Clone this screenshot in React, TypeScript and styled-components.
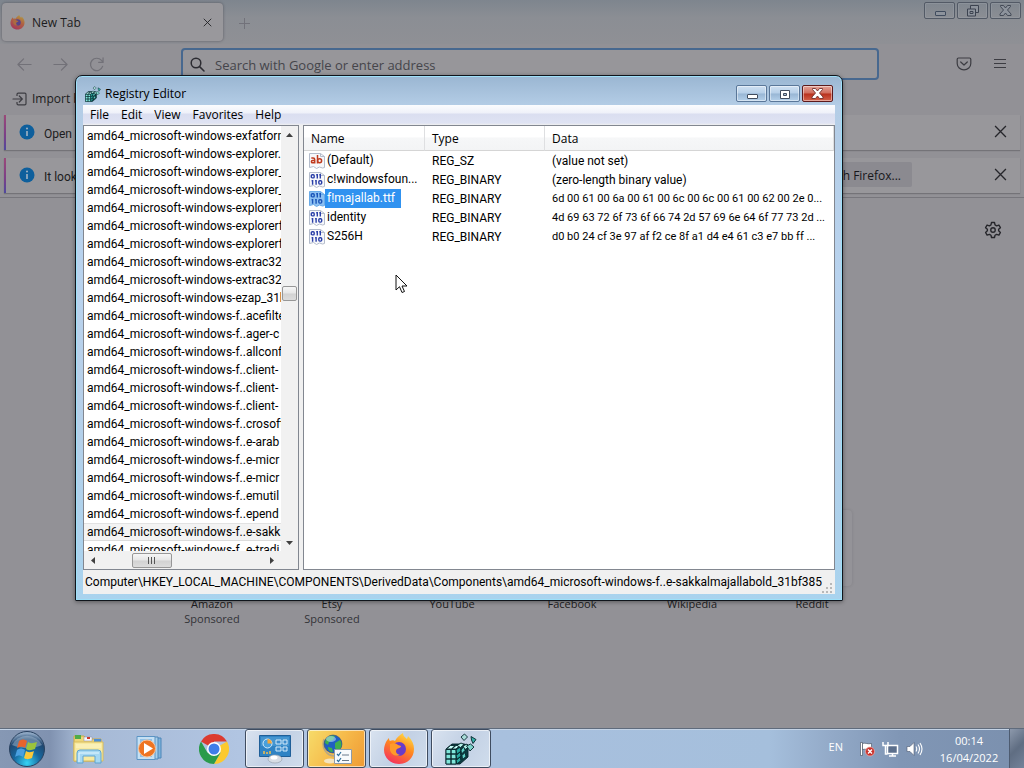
import React from "react";
import styled, { createGlobalStyle } from "styled-components";

const GlobalStyle = createGlobalStyle`
  *, *::before, *::after { box-sizing: border-box; }
  html, body { margin: 0; padding: 0; }
  body, button, input, table {
    font-family: "Open Sans", "Noto Sans", sans-serif;
    font-size: 12px;
    line-height: 16px;
    color: #000;
  }
  button { border: 0; padding: 0; background: none; }
  a { color: inherit; text-decoration: none; }
  svg { display: block; flex: none; }
`;

const compact = `font-family: Roboto, "Open Sans", sans-serif;`;

const Desktop = styled.div`
  position: relative;
  display: flex;
  flex-direction: column;
  min-height: 100vh;
  overflow: hidden;
  background: #949398;
`;

/* ---------- dimmed browser ---------- */

const Browser = styled.main`
  flex: 1;
  display: flex;
  flex-direction: column;
  color: #1c1c20;
  background: #929196;
`;

const TabStrip = styled.div`
  display: flex;
  align-items: flex-start;
  height: 44px;
  padding: 2px 3px 0 2px;
  background: linear-gradient(#7e858e, #8b8e94 40%, #8f9095);
`;

const Tab = styled.div`
  display: flex;
  align-items: center;
  gap: 7px;
  width: 221px;
  height: 38px;
  margin-top: 1px;
  padding: 1px 8px 0;
  border-radius: 4px;
  background: #99989c;
  box-shadow: 0 0 2px 1px rgba(60, 60, 70, 0.3);
`;

const TabTitle = styled.span`
  flex: 1;
`;

const GhostButton = styled.button<{ $w: number; $h: number }>`
  display: flex;
  align-items: center;
  justify-content: center;
  flex: none;
  width: ${(p) => p.$w}px;
  height: ${(p) => p.$h}px;
`;

const Captions = styled.div`
  display: flex;
  gap: 2px;
  margin-left: auto;
`;

const CaptionButton = styled.button<{ $kind: "dim" | "normal" | "close" }>`
  display: flex;
  align-items: center;
  justify-content: center;
  width: 31px;
  height: 17px;
  border-radius: 2px;
  border: 1px solid
    ${(p) => (p.$kind === "dim" ? "#535a66" : p.$kind === "close" ? "#5c1a1c" : "#5a7799")};
  background: ${(p) =>
    p.$kind === "dim"
      ? "transparent"
      : p.$kind === "close"
      ? "linear-gradient(#e3a398, #d06c5c 48%, #b8301c 52%, #d4614a)"
      : "linear-gradient(#cfe0f2, #b6cfe8 48%, #98b6d4 52%, #b4d0ea)"};
  box-shadow: inset 0 0 0 1px
    ${(p) => (p.$kind === "dim" ? "rgba(160,165,175,0.35)" : "rgba(255,255,255,0.45)")};
`;

const NavBar = styled.div`
  display: flex;
  align-items: center;
  height: 40px;
  padding: 0 6px;
`;

const AddressBox = styled.label`
  display: flex;
  align-items: center;
  gap: 10px;
  flex: 1;
  height: 32px;
  margin: 0 67px;
  padding: 0 7px;
  border: 2px solid #47688f;
  border-radius: 4px;
  background: #97969a;
`;

const AddressInput = styled.input`
  flex: 1;
  min-width: 0;
  border: 0;
  outline: 0;
  padding: 2px 0 0;
  background: none;
  font-size: 13px;
  line-height: 20px;
  &::placeholder { color: #45454b; opacity: 1; }
`;

const BookmarkBar = styled.div`
  display: flex;
  align-items: center;
  gap: 4px;
  height: 29px;
  padding: 0 12px;
`;

const Notices = styled.div`
  ${compact}
  display: flex;
  flex-direction: column;
  gap: 8px;
  padding: 2px 4px 4px;
  border-bottom: 1px solid #77767c;
`;

const Notice = styled.div`
  display: flex;
  align-items: center;
  height: 35px;
  padding: 0 2px 2px 13px;
  gap: 9px;
  border-left: 2px solid;
  border-image: linear-gradient(#9c4a78, #7a3f88 60%, #4c4aa0) 1;
  background: #98979b;
  box-shadow: 0 1px 1px rgba(60, 60, 66, 0.35);
`;

const NoticeText = styled.span`
  flex: 1;
  padding-top: 4px;
`;

const NoticeAction = styled.button`
  height: 25px;
  padding: 2px 11px 0;
  margin-right: 61px;
  font-family: "Open Sans", sans-serif;
  background: #8b8a90;
  color: #17171b;
  border-radius: 2px;
`;

const NewTabPage = styled.div`
  flex: 1;
  display: flex;
  flex-direction: column;
  justify-content: space-between;
  padding: 14px 13px 102px;
`;

const SettingsRow = styled.div`
  display: flex;
  justify-content: flex-end;
`;

const Shortcuts = styled.nav`
  display: flex;
  justify-content: center;
`;

const Shortcut = styled.a`
  display: flex;
  flex-direction: column;
  align-items: center;
  width: 120px;
  font-size: 11px;
  line-height: 15px;
`;

const Tile = styled.span`
  width: 80px;
  height: 76px;
  margin-bottom: 10px;
  border-radius: 4px;
  background: #949398;
  box-shadow: 0 0 3px rgba(70, 70, 76, 0.2);
`;

const Sponsor = styled.span`
  color: #333338;
`;

/* ---------- registry editor window ---------- */

const Win = styled.section`
  position: absolute;
  top: 75px;
  left: 75px;
  right: 181px;
  bottom: 167px;
  display: flex;
  flex-direction: column;
  padding: 0 7px 6px;
  border: 1px solid #10151c;
  border-radius: 7px 7px 1px 1px;
  background: linear-gradient(#9ab6d2, #b4cde6 30px, #b9d3ee 200px, #b7cfe8 60%, #a9d3ee);
  box-shadow: inset 0 0 0 1px #9fe0f8, 0 1px 4px rgba(0, 0, 0, 0.4);
`;

const TitleBar = styled.header`
  display: flex;
  align-items: center;
  gap: 4px;
  height: 29px;
  padding: 6px 2px 0;
`;

const Title = styled.h1`
  flex: 1;
  margin: 0;
  font-size: 12px;
  line-height: 16px;
  font-weight: 400;
`;

const MenuBar = styled.nav`
  display: flex;
  height: 20px;
  padding: 0 1px;
  background: linear-gradient(#fbfcfe, #eff1f9 40%, #dadef0 45%, #dfe3f3 90%, #f0f0f0);
`;

const MenuItem = styled.button`
  padding: 0 6px;
  line-height: 20px;
`;

const Panes = styled.div`
  flex: 1;
  min-height: 0;
  display: flex;
  gap: 4px;
  background: #f0f0f0;
`;

const Pane = styled.div<{ $w?: number }>`
  display: flex;
  flex-direction: column;
  min-width: 0;
  flex: ${(p) => (p.$w ? `0 0 ${p.$w}px` : "1")};
  border: 1px solid #828790;
  background: #fff;
  overflow: hidden;
`;

const TreeArea = styled.div`
  flex: 1;
  min-height: 0;
  display: flex;
`;

const Tree = styled.ul`
  ${compact}
  flex: 1;
  min-width: 0;
  margin: 0;
  padding: 1px 0 0;
  list-style: none;
  overflow: hidden;
`;

const TreeItem = styled.li<{ $on: boolean }>`
  height: 18px;
  padding-left: 3px;
  line-height: 18px;
  white-space: nowrap;
  overflow: hidden;
  background: ${(p) => (p.$on ? "#f3f3f3" : "transparent")};
  box-shadow: ${(p) => (p.$on ? "inset 0 1px #e2e2e2, inset 0 -1px #dcdcdc" : "none")};
`;

const Scroll = styled.div<{ $dir: "row" | "column" }>`
  display: flex;
  flex: none;
  flex-direction: ${(p) => p.$dir};
  align-items: center;
  ${(p) => (p.$dir === "row" ? "height: 18px; padding-right: 18px;" : "width: 17px;")}
  background: #f1f1f1;
`;

const Track = styled.span<{ $grow: number }>`
  flex: ${(p) => p.$grow};
`;

const Thumb = styled.span<{ $w: number }>`
  display: flex;
  align-items: center;
  justify-content: center;
  gap: 2px;
  width: ${(p) => p.$w}px;
  height: 15px;
  border: 1px solid #979797;
  border-radius: 2px;
  background: linear-gradient(#f6f6f6, #e6e6e6 48%, #d2d2d2 52%, #dcdcdc);
`;

const Grip = styled.i`
  width: 1px;
  height: 7px;
  background: #555;
`;

const Values = styled.table`
  width: 100%;
  table-layout: fixed;
  border-collapse: separate;
  border-spacing: 0;
  text-align: left;
`;

const Head = styled.th<{ $w?: number }>`
  width: ${(p) => (p.$w ? `${p.$w}px` : "auto")};
  height: 25px;
  padding: 1px 6px 0 7px;
  font-weight: 400;
  border-right: 1px solid #dedfe1;
  border-bottom: 1px solid #d5d5d5;
  background: linear-gradient(#fff 45%, #f6f7f8 50%, #f3f4f5);
`;

const Cell = styled.td<{ $hex?: boolean }>`
  ${compact}
  height: 19px;
  padding: 0 0 0 7px;
  font-size: ${(p) => (p.$hex ? 11 : 12)}px;
  white-space: nowrap;
  overflow: hidden;
`;

const NameCell = styled(Cell)`
  padding-left: 5px;
`;

const NameFlex = styled.div`
  display: flex;
  align-items: center;
`;

const NameText = styled.span<{ $on: boolean }>`
  padding: 1px 6px 2px 2px;
  color: ${(p) => (p.$on ? "#fff" : "#000")};
  background: ${(p) => (p.$on ? "#3092f0" : "transparent")};
`;

const StatusBar = styled.footer`
  display: flex;
  align-items: flex-end;
  height: 24px;
  padding: 0 2px;
  background: #f0f0f0;
`;

const Path = styled.span`
  ${compact}
  flex: 1;
  min-width: 0;
  line-height: 24px;
  white-space: nowrap;
`;

const Pointer = styled.div`
  position: absolute;
  left: 395px;
  top: 274px;
`;

/* ---------- taskbar ---------- */

const Taskbar = styled.footer`
  display: flex;
  align-items: stretch;
  height: 40px;
  border-top: 1px solid #5f6b7c;
  box-shadow: inset 0 1px #c3d3e6;
  background: linear-gradient(
    90deg,
    #8698b4 0,
    #8092b0 50px,
    #a6b9d5 80px,
    #b1c5e2 240px,
    #a8c0de 500px,
    #a5bfdc 770px,
    #93aac8 830px,
    #8096b5 900px,
    #7b90ae 100%
  );
`;

const TaskButton = styled.button<{ $w: number; $tone?: "open" | "alert" }>`
  display: flex;
  align-items: center;
  justify-content: center;
  width: ${(p) => p.$w}px;
  margin-right: ${(p) => (p.$tone ? 3 : 0)}px;
  border: 1px solid ${(p) => (p.$tone ? "#3f4c60" : "transparent")};
  border-radius: 3px;
  box-shadow: ${(p) => (p.$tone ? "inset 0 0 0 1px rgba(255,255,255,0.6)" : "none")};
  background: ${(p) =>
    p.$tone === "alert"
      ? "linear-gradient(120deg, #f6dc6a, #f6bb4b 50%, #ef9a34)"
      : p.$tone === "open"
      ? "linear-gradient(120deg, #d9e3f0, #c2d0e4 50%, #d0ddec)"
      : "none"};
`;

const StartButton = styled(TaskButton)`
  margin-right: 4px;
`;

const Tray = styled.div`
  display: flex;
  align-items: center;
  margin-left: auto;
  color: #fff;
`;

const Lang = styled.span`
  margin-right: 16px;
  padding-bottom: 4px;
  font-size: 11px;
`;

const TrayIcons = styled.div`
  display: flex;
  align-items: center;
  gap: 7px;
`;

const Clock = styled.time`
  width: 80px;
  margin-left: 6px;
  padding-top: 1px;
  text-align: center;
  font-size: 11px;
  line-height: 17px;
`;

const ShowDesktop = styled.button`
  width: 15px;
  align-self: stretch;
  border-left: 1px solid #4d5b70;
  background: linear-gradient(135deg, #8d99ac, #5f6d82 50%, #74839a);
`;

/* ---------- drawings ---------- */

const Firefox = ({ size, dim }: { size: number; dim?: boolean }) => (
  <svg width={size} height={size} viewBox="0 0 32 32" opacity={dim ? 0.8 : 1}>
    <defs>
      <linearGradient id={dim ? "fxd" : "fx"} x1="0.8" y1="0" x2="0.3" y2="1">
        <stop offset="0" stopColor={dim ? "#b8a02c" : "#ffe14a"} />
        <stop offset="0.45" stopColor={dim ? "#b5562c" : "#ff8a1e"} />
        <stop offset="1" stopColor={dim ? "#a8204c" : "#f5315e"} />
      </linearGradient>
    </defs>
    <path
      d="M3 9c1-2 2-3 3-4 0 1 0 2 1 3 2-1 4-1 5 0 2-4 5-6 8-8 0 3 2 4 4 6l1-3c4 4 6 8 6 13 0 9-7 15-15 15S1 25 1 17c0-3 1-6 2-8z"
      fill={`url(#${dim ? "fxd" : "fx"})`}
    />
    <circle cx="16" cy="16" r="7" fill={dim ? "#4a2f84" : "#6a3cc8"} />
    <path d="M7 11c3-1 6-1 8 1l3 1c0 2-3 2-4 3-2 2-1 5 3 6-5 2-9-1-10-5z" fill={dim ? "#b0602c" : "#ff9a2a"} />
  </svg>
);

const Minimize = ({ dim }: { dim?: boolean }) => (
  <svg width="12" height="12" viewBox="0 0 12 12">
    <rect x="1.5" y="6.5" width="10" height="4" rx="0.5" fill={dim ? "#8d939c" : "#fff"} stroke="#404c5e" />
  </svg>
);

const Maximize = () => (
  <svg width="12" height="12" viewBox="0 0 12 12">
    <path d="M1.500 2.500h9v8h-9z" fill="#fff" stroke="#404c5e" />
    <path d="M4.500 5.500h3v2h-3z" fill="#a8bfd8" stroke="#404c5e" />
  </svg>
);

const Restore = () => (
  <svg width="13" height="12" viewBox="0 0 13 12">
    <path d="M4.500.5h8v7h-3v3.500h-8v-7h3z" fill="#8d939c" stroke="#3c4350" />
    <path d="M4.500 4h5v4M4 6.500h3v2H4z" fill="none" stroke="#3c4350" />
  </svg>
);

const CloseMark = ({ dim }: { dim?: boolean }) => (
  <svg width="13" height="11" viewBox="0 0 13 11">
    <path
      d="M1.500.5h3l2 2.500 2-2.500h3v1L8.500 5l3.500 4v1.500H8.500l-2-2.500-2 2.500H1V9l3.500-4L1.500 1.500z"
      fill={dim ? "#8d939c" : "#fff"}
      stroke={dim ? "#3c4350" : "#70302c"}
      strokeWidth="0.9"
    />
  </svg>
);

const Cross = ({ s, c }: { s: number; c: string }) => (
  <svg width={s} height={s} viewBox="0 0 12 12" fill="none" stroke={c} strokeWidth="1.200">
    <path d="M1 1l10 10M11 1L1 11" />
  </svg>
);

const Arrow = ({ flip }: { flip?: boolean }) => (
  <svg width="15" height="15" viewBox="0 0 16 16" fill="none" stroke="#727178" strokeWidth="1.300">
    <path d={flip ? "M1 8h14M9 2l6 6-6 6" : "M15 8H1M7 2L1 8l6 6"} strokeLinecap="round" strokeLinejoin="round" />
  </svg>
);

const Reload = () => (
  <svg width="15" height="15" viewBox="0 0 16 16" fill="none" stroke="#727178" strokeWidth="1.300">
    <path d="M14.500 10a6.600 6.600 0 1 1-1.200-6.300L15 5.500M15 1v4.700h-4.700" strokeLinecap="round" />
  </svg>
);

const Magnifier = () => (
  <svg width="15" height="15" viewBox="0 0 15 15" fill="none" stroke="#2c2c32" strokeWidth="1.500">
    <circle cx="6" cy="6" r="4.800" />
    <path d="M9.600 9.600l4.400 4.400" strokeLinecap="round" />
  </svg>
);

const Pocket = () => (
  <svg width="16" height="16" viewBox="0 0 16 16" fill="none" stroke="#3c3c42" strokeWidth="1.200">
    <path d="M2.500 2h11c.8 0 1.300.5 1.300 1.300V7.500a6.800 6.300 0 0 1-13.600 0V3.300C1.200 2.500 1.700 2 2.500 2z" />
    <path d="M4.700 6L8 9l3.300-3" strokeLinecap="round" strokeLinejoin="round" />
  </svg>
);

const Burger = () => (
  <svg width="14" height="12" viewBox="0 0 14 12" stroke="#3c3c42" strokeWidth="1">
    <path d="M1 1.500h12M1 5.500h12M1 9.500h12" />
  </svg>
);

const ImportIcon = () => (
  <svg width="16" height="14" viewBox="0 0 16 14" fill="none" stroke="#3c3c42" strokeWidth="1.200">
    <path d="M5 4V2.500c0-.8.4-1.300 1.200-1.300h6.600c.8 0 1.200.5 1.200 1.300v9c0 .8-.4 1.300-1.200 1.300H6.200C5.400 12.800 5 12.300 5 11.500V10" />
    <path d="M1 7h9M7.300 4l3 3-3 3" strokeLinecap="round" />
  </svg>
);

const Info = () => (
  <svg width="16" height="16" viewBox="0 0 16 16">
    <circle cx="8" cy="8" r="7.500" fill="#0e5f9c" />
    <path d="M8 7v5" stroke="#a3b3c4" strokeWidth="1.600" />
    <circle cx="8" cy="4.500" r="1" fill="#a3b3c4" />
  </svg>
);

const Gear = () => (
  <svg width="18" height="18" viewBox="0 0 24 24" fill="none" stroke="#26262b" strokeWidth="1.800" strokeLinejoin="round">
    <path d="M10 2h4l.7 3.200 2 1.200 3.200-1 2 3.500-2.400 2.200v2l2.400 2.200-2 3.500-3.200-1-2 1.200L14 22h-4l-.7-3-2-1.200-3.200 1-2-3.500 2.400-2.200v-2L2.100 8.900l2-3.500 3.200 1 2-1.200z" />
    <circle cx="12" cy="12" r="3" />
  </svg>
);

const RegIcon = ({ size }: { size: number }) => (
  <svg width={size} height={size} viewBox="0 0 32 32" stroke="#05252a" strokeWidth="0.900" strokeLinejoin="round">
    <path d="M1 16l6-5h12l4 1v12l-8 7H1z" fill="#0c3c42" />
    <path d="M1 16.500h5v4.500H1zM6 16.500h5v4.500H6zM1 21h5v5H1zM6 21h5v5H6zM1 26h5v5H1zM6 26h5v5H6z" fill="#7fe6da" />
    <path d="M1.500 16l4-3.500h4.500l-3.500 3.500zM7 16l4-3.500h4l-4 3.500z" fill="#c8fff8" />
    <path d="M11 17l4-3 1 4-4 3.500zM11 22l4-3 1 4-4 3.500zM11 27l4-3 1 3.500-4 3.500z" fill="#28a8a0" />
    <path d="M16 17l3-3.500 1 4-3.500 3.500zM17 22.500l3-3 1 4-3.500 3z" fill="#5fd0c6" />
    <path d="M12 12.500l4-2.500 3 1.500-3.500 3zM18 13l4-2 2 3-4 2.500z" fill="#b4f2ea" />
    <path d="M16 4l3.500-3 3 3-3.500 3.500z" fill="#a9dcd8" />
    <path d="M26 3.500l5 3-3 4-1.500-3.500z" fill="#36b0a8" />
    <path d="M21.500 13l4-2 3.500 3-4 4z" fill="#7fd4cc" />
  </svg>
);

const ValueIcon = ({ kind, on }: { kind: "ab" | "bin"; on?: boolean }) => (
  <svg width="16" height="16" viewBox="0 0 16 16">
    <path d="M.5.500h11l4 3v11l-2 .5-3-1-3 1.500-3-2-4 1z" fill={on ? "#8cc0f2" : "#f7f8fb"} stroke={on ? "#6aabe8" : "#b4bccb"} />
    <path d="M11.500.5v3h4" fill="none" stroke={on ? "#6aabe8" : "#b4bccb"} />
    {kind === "ab" ? (
      <g fill="none" stroke="#c03a1e" strokeWidth="1.500">
        <path d="M2.300 5h1.800c1 0 1.600.5 1.600 1.500v4M5.700 7.500H3.500c-1.500 0-1.500 2.300 0 2.300h2.200M8.500 2v8.500" />
        <circle cx="10.600" cy="7.800" r="2" />
      </g>
    ) : (
      <g fill="none" stroke={on ? "#1b55b8" : "#2a3fa8"} strokeWidth="1.400">
        <rect x="2.300" y="2.700" width="2.900" height="3.200" rx="1" />
        <path d="M8.300 2v4.600M11.300 2v4.600M7.200 2.700h1M10.300 2.700h1M3.600 8v4.800M7.100 8v4.800M2.600 8.700h1M6.100 8.700h1" />
        <rect x="9.800" y="8.700" width="2.900" height="3.400" rx="1" />
      </g>
    )}
  </svg>
);

const Tri = ({ d }: { d: string }) => (
  <svg width="17" height="17" viewBox="0 0 17 17">
    <path d={d} fill="#404040" />
  </svg>
);

const SizeGrip = () => (
  <svg width="12" height="12" viewBox="0 0 12 12" fill="#b8b8b8">
    <path d="M9 1h2v2H9zM9 5h2v2H9zM5 5h2v2H5zM9 9h2v2H9zM5 9h2v2H5zM1 9h2v2H1z" />
  </svg>
);

const Orb = () => (
  <svg width="38" height="38" viewBox="0 0 38 38">
    <defs>
      <radialGradient id="orb" cx="0.5" cy="0.9" r="0.85">
        <stop offset="0" stopColor="#35d3f4" />
        <stop offset="0.45" stopColor="#17689f" />
        <stop offset="0.8" stopColor="#20476f" />
        <stop offset="1" stopColor="#8fa8c4" />
      </radialGradient>
    </defs>
    <circle cx="19" cy="19" r="17.500" fill="url(#orb)" stroke="#29415f" />
    <path d="M4 15a16 14 0 0 1 30 0c-8 4-22 4-30 0z" fill="#c5d6e8" opacity="0.4" />
    <path d="M11 11c3-2 5-2 8 0l-2 7c-3-2-5-1-8 0z" fill="#e8642c" />
    <path d="M20 12c3 2 6 1 9 0l-2 7c-3 1-6 2-9 0z" fill="#9bc43c" />
    <path d="M9 20c3-2 5-2 8 0l-2 7c-3-2-5-2-8 0z" fill="#4aa0e0" />
    <path d="M18 21c3 2 6 1 8 0l-2 7c-3 1-5 2-8 0z" fill="#fbc93a" />
  </svg>
);

const Explorer = () => (
  <svg width="34" height="32" viewBox="0 0 34 32">
    <path d="M2 3h10l2 3h15v22H2z" fill="#eed67a" stroke="#c8a848" />
    <path d="M3 2h6v4H3z" fill="#4eac4a" />
    <path d="M12 4h8v4h-8z" fill="#f6f8fb" stroke="#88a" strokeWidth="0.500" />
    <path d="M15 4h3v2h-3z" fill="#cc3b2c" />
    <path d="M22 6h7v4h-7z" fill="#4d8fd6" />
    <path d="M2 9h29v19H2z" fill="#f8eaa0" stroke="#d8bc5c" />
    <path d="M4 14h25M4 12h25" stroke="#fdf6cc" />
    <path d="M5 30V20q0-3 3-3h18q3 0 3 3v10h-6v-7H11v7z" fill="#a6d8f2" stroke="#5fa4d0" />
    <path d="M7 29v-9h20" fill="none" stroke="#e4f6ff" />
  </svg>
);

const MediaPlayer = () => (
  <svg width="32" height="28" viewBox="0 0 32 28">
    <path d="M9 3h17v20H9z" fill="#7fb3dc" stroke="#4d86b8" />
    <path d="M6 2h17v22H6z" fill="#a8cfea" stroke="#4d86b8" />
    <path d="M2 1.500h18v23H2z" fill="#c5e0f4" stroke="#5b94c4" />
    <path d="M5 4h12v18H5z" fill="#8fc0e6" />
    <circle cx="12" cy="13.500" r="8.500" fill="#ee7422" stroke="#f8c49c" />
    <path d="M9 8l9 5.500L9 19z" fill="#fff" />
  </svg>
);

const Chrome = () => (
  <svg width="30" height="30" viewBox="0 0 30 30">
    <path d="M15 15L2 7.500A15 15 0 0 1 28 7.500H15z" fill="#dc3b30" />
    <path d="M15 15L28 7.500A15 15 0 0 1 15 30l6.500-11.200z" fill="#fbc92f" />
    <path d="M15 15l6.500 3.700L15 30A15 15 0 0 1 2 7.500l6.500 11.300z" fill="#2b9b4b" />
    <circle cx="15" cy="15" r="7" fill="#fff" />
    <circle cx="15" cy="15" r="5.500" fill="#3f7de8" />
  </svg>
);

const ControlPanel = () => (
  <svg width="34" height="30" viewBox="0 0 34 30">
    <path d="M1.500 1.500h31v21h-31z" fill="#2f83c4" stroke="#1f5f98" />
    <path d="M3 3h28v9H3z" fill="#5aa8dc" opacity="0.500" />
    <circle cx="9.500" cy="9.500" r="4.500" fill="#48a0dc" stroke="#d4ebfa" />
    <path d="M9.500 9.500V5a4.500 4.500 0 0 1 4.500 4.500z" fill="#f2a63c" />
    <path d="M18 6h5v4h-5zM25 6h4v4h-4zM18 13h5v4h-5zM25 13h4v4h-4z" fill="#3c8ccc" stroke="#d4ebfa" />
    <path d="M6 17v3M9 18v2M12 17v3" stroke="#f2c04c" strokeWidth="1.500" />
    <ellipse cx="17" cy="25" rx="7" ry="4" fill="#d7dde4" stroke="#98a2ae" strokeWidth="0.700" />
    <ellipse cx="16" cy="23.500" rx="3.500" ry="2" fill="#fff" />
  </svg>
);

const GlobeList = () => (
  <svg width="32" height="32" viewBox="0 0 32 32">
    <ellipse cx="9" cy="28" rx="6" ry="2.500" fill="#f4e4c0" />
    <path d="M3 6c-3 8 2 17 11 17" fill="none" stroke="#b9a880" strokeWidth="1.500" />
    <circle cx="12" cy="11" r="9" fill="#1f5fc0" stroke="#204070" strokeWidth="0.500" />
    <path d="M5 6c3-4 7-4 9-3l-2 4-4 2-1 3-3-2zM14 10l5-3c3 4 1 9-2 11l-3-3zM7 14l4 1 1 4c-3 0-5-2-5-5z" fill="#3fae4c" />
    <ellipse cx="10" cy="6" rx="5" ry="3" fill="#bfe4ff" opacity="0.550" />
    <path d="M13.500 16.500h17v14h-17z" fill="#f8fafc" stroke="#8e9aa8" />
    <path d="M16 21l1.500 1.500L20 19M16 27l1.500 1.500L20 25" fill="none" stroke="#2f6f9c" strokeWidth="1.200" />
    <path d="M21 22h7M21 27.500h7" stroke="#6a7a8c" />
  </svg>
);

const FlagIcon = () => (
  <svg width="16" height="16" viewBox="0 0 16 16">
    <path d="M1.500 1.500h2v13h-2z" fill="#fff" stroke="#3a4658" strokeWidth="0.600" />
    <path d="M3.500 2.500c3-1 5 1 9 0v6c-4 1-6-1-9 0z" fill="#fff" stroke="#3a4658" strokeWidth="0.600" />
    <circle cx="11" cy="10.500" r="4.500" fill="#c9302a" stroke="#f0b4b0" strokeWidth="0.700" />
    <path d="M9 8.500l4 4M13 8.500l-4 4" stroke="#fff" strokeWidth="1.400" />
  </svg>
);

const NetIcon = () => (
  <svg width="17" height="16" viewBox="0 0 17 16">
    <path d="M5.500 4.500h10v8h-10z" fill="#5c6f8c" stroke="#fff" strokeWidth="1.500" />
    <path d="M7 15h7M10.500 13v2" stroke="#fff" strokeWidth="1.500" />
    <path d="M1 1v3.500h5V1M3.500 4.500V13h2" fill="none" stroke="#fff" strokeWidth="1.500" />
  </svg>
);

const VolumeIcon = () => (
  <svg width="17" height="16" viewBox="0 0 17 16">
    <path d="M1 5.500h3L8 1.500v13l-4-4H1z" fill="#fff" stroke="#4a5870" strokeWidth="0.600" />
    <path d="M10 5.500q1.500 2.500 0 5M12 3.500q3 4.500 0 9M14 2q4 6 0 12" fill="none" stroke="#fff" strokeWidth="1.100" />
  </svg>
);

/* ---------- data ---------- */

const SELECTED_KEY = 22;
const KEYS = [
  "exfatform", "explorer.", "explorer_", "explorer_", "explorerfr", "explorerfr", "explorerfr",
  "extrac32", "extrac32_", "ezap_31b", "f..acefilte", "f..ager-c", "f..allconf", "f..client-",
  "f..client-", "f..client-", "f..crosoft", "f..e-arab", "f..e-micr", "f..e-micr", "f..emutil",
  "f..epend", "f..e-sakk", "f..e-tradi",
];

const VALUES = [
  { name: "(Default)", type: "REG_SZ", data: "(value not set)" },
  { name: "c!windowsfoun...", type: "REG_BINARY", data: "(zero-length binary value)" },
  { name: "f!majallab.ttf", type: "REG_BINARY", data: "6d 00 61 00 6a 00 61 00 6c 00 6c 00 61 00 62 00 2e 0..." },
  { name: "identity", type: "REG_BINARY", data: "4d 69 63 72 6f 73 6f 66 74 2d 57 69 6e 64 6f 77 73 2d ..." },
  { name: "S256H", type: "REG_BINARY", data: "d0 b0 24 cf 3e 97 af f2 ce 8f a1 d4 e4 61 c3 e7 bb ff ..." },
];

const SITES = [
  { name: "Amazon", ad: true },
  { name: "Etsy", ad: true },
  { name: "YouTube", ad: false },
  { name: "Facebook", ad: false },
  { name: "Wikipedia", ad: false },
  { name: "Reddit", ad: false },
];

const BrowserWindow = () => (
  <Browser>
    <TabStrip>
      <Tab>
        <Firefox size={15} dim />
        <TabTitle>New Tab</TabTitle>
        <GhostButton $w={16} $h={16} aria-label="Close tab"><Cross s={9} c="#222226" /></GhostButton>
      </Tab>
      <GhostButton $w={42} $h={42} aria-label="Open a new tab">
        <svg width="11" height="11" viewBox="0 0 11 11" stroke="#72727a"><path d="M5.500 0v11M0 5.500h11" /></svg>
      </GhostButton>
      <Captions>
        <CaptionButton $kind="dim" aria-label="Minimize browser"><Minimize dim /></CaptionButton>
        <CaptionButton $kind="dim" aria-label="Restore browser"><Restore /></CaptionButton>
        <CaptionButton $kind="dim" aria-label="Close browser"><CloseMark dim /></CaptionButton>
      </Captions>
    </TabStrip>
    <NavBar>
      <GhostButton $w={36} $h={36} aria-label="Back"><Arrow /></GhostButton>
      <GhostButton $w={36} $h={36} aria-label="Forward"><Arrow flip /></GhostButton>
      <GhostButton $w={36} $h={36} aria-label="Reload"><Reload /></GhostButton>
      <AddressBox>
        <Magnifier />
        <AddressInput aria-label="Address" placeholder="Search with Google or enter address" />
      </AddressBox>
      <GhostButton $w={36} $h={36} aria-label="Save to Pocket"><Pocket /></GhostButton>
      <GhostButton $w={36} $h={36} aria-label="Open menu"><Burger /></GhostButton>
    </NavBar>
    <BookmarkBar>
      <ImportIcon />
      <a href="#import">Import bookmarks...</a>
    </BookmarkBar>
    <Notices>
      <Notice>
        <Info />
        <NoticeText>Open previous tabs?</NoticeText>
        <GhostButton $w={36} $h={32} aria-label="Dismiss restore notice"><Cross s={13} c="#26262b" /></GhostButton>
      </Notice>
      <Notice>
        <Info />
        <NoticeText>It looks like you haven't started Firefox in a while.</NoticeText>
        <NoticeAction>Refresh Firefox...</NoticeAction>
        <GhostButton $w={36} $h={32} aria-label="Dismiss refresh notice"><Cross s={13} c="#26262b" /></GhostButton>
      </Notice>
    </Notices>
    <NewTabPage>
      <SettingsRow>
        <GhostButton $w={36} $h={36} aria-label="Customize new tab"><Gear /></GhostButton>
      </SettingsRow>
      <Shortcuts>
        {SITES.map((s) => (
          <Shortcut key={s.name} href={`#${s.name}`}>
            <Tile />
            <span>{s.name}</span>
            {s.ad && <Sponsor>Sponsored</Sponsor>}
          </Shortcut>
        ))}
      </Shortcuts>
    </NewTabPage>
  </Browser>
);

const RegistryWindow = () => (
  <Win>
    <TitleBar>
      <RegIcon size={16} />
      <Title>Registry Editor</Title>
      <Captions>
        <CaptionButton $kind="normal" aria-label="Minimize"><Minimize /></CaptionButton>
        <CaptionButton $kind="normal" aria-label="Maximize"><Maximize /></CaptionButton>
        <CaptionButton $kind="close" aria-label="Close"><CloseMark /></CaptionButton>
      </Captions>
    </TitleBar>
    <MenuBar>
      {["File", "Edit", "View", "Favorites", "Help"].map((m) => (
        <MenuItem key={m}>{m}</MenuItem>
      ))}
    </MenuBar>
    <Panes>
      <Pane $w={216}>
        <TreeArea>
          <Tree>
            {KEYS.map((k, i) => (
              <TreeItem key={i} $on={i === SELECTED_KEY}>{`amd64_microsoft-windows-${k}`}</TreeItem>
            ))}
          </Tree>
          <Scroll $dir="column">
            <Tri d="M5 11l3.500-4 3.500 4z" />
            <Track $grow={38} />
            <Thumb $w={15} />
            <Track $grow={62} />
            <Tri d="M5 7l3.500 4L12 7z" />
          </Scroll>
        </TreeArea>
        <Scroll $dir="row">
          <Tri d="M11 5L7 8.500l4 3.500z" />
          <Track $grow={25} />
          <Thumb $w={40}><Grip /><Grip /><Grip /></Thumb>
          <Track $grow={75} />
          <Tri d="M7 5l4 3.500L7 12z" />
        </Scroll>
      </Pane>
      <Pane>
        <Values>
          <thead>
            <tr>
              <Head $w={121}>Name</Head>
              <Head $w={120}>Type</Head>
              <Head>Data</Head>
            </tr>
          </thead>
          <tbody>
            {VALUES.map((v, i) => (
              <tr key={v.name}>
                <NameCell>
                  <NameFlex>
                    <ValueIcon kind={i === 0 ? "ab" : "bin"} on={i === 2} />
                    <NameText $on={i === 2}>{v.name}</NameText>
                  </NameFlex>
                </NameCell>
                <Cell>{v.type}</Cell>
                <Cell $hex={i > 1}>{v.data}</Cell>
              </tr>
            ))}
          </tbody>
        </Values>
      </Pane>
    </Panes>
    <StatusBar>
      <Path>{"Computer\\HKEY_LOCAL_MACHINE\\COMPONENTS\\DerivedData\\Components\\amd64_microsoft-windows-f..e-sakkalmajallabold_31bf385"}</Path>
      <SizeGrip />
    </StatusBar>
  </Win>
);

export default function App() {
  return (
    <>
      <GlobalStyle />
      <Desktop>
        <BrowserWindow />
        <RegistryWindow />
        <Pointer>
          <svg width="13" height="20" viewBox="0 0 13 20">
            <path d="M1 1v15l3.500-3.300 2.500 5.800 2.500-1L7 12h5z" fill="#fff" stroke="#111" />
          </svg>
        </Pointer>
        <Taskbar>
          <StartButton $w={54} aria-label="Start"><Orb /></StartButton>
          <TaskButton $w={62} aria-label="Explorer"><Explorer /></TaskButton>
          <TaskButton $w={62} aria-label="Media player"><MediaPlayer /></TaskButton>
          <TaskButton $w={63} aria-label="Chrome"><Chrome /></TaskButton>
          <TaskButton $w={59} $tone="open" aria-label="Control panel"><ControlPanel /></TaskButton>
          <TaskButton $w={59} $tone="alert" aria-label="Network tasks"><GlobeList /></TaskButton>
          <TaskButton $w={59} $tone="open" aria-label="Firefox"><Firefox size={32} /></TaskButton>
          <TaskButton $w={60} $tone="open" aria-label="Registry Editor"><RegIcon size={32} /></TaskButton>
          <Tray>
            <Lang>EN</Lang>
            <TrayIcons>
              <FlagIcon />
              <NetIcon />
              <VolumeIcon />
            </TrayIcons>
            <Clock>00:14<br />16/04/2022</Clock>
            <ShowDesktop aria-label="Show desktop" />
          </Tray>
        </Taskbar>
      </Desktop>
    </>
  );
}
